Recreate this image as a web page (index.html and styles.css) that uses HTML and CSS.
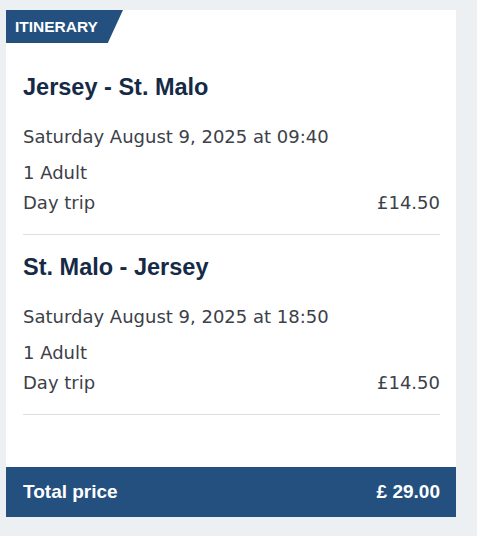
FILE: index.html
```html
<!DOCTYPE html>
<html lang="en">
<head>
<meta charset="utf-8">
<title>Itinerary</title>
<link rel="stylesheet" href="styles.css">
</head>
<body>
<div class="card">
  <div class="badge">ITINERARY</div>
  <div class="body">
    <div class="leg">
      <h2 class="route">Jersey - St. Malo</h2>
      <div class="date">Saturday August 9, 2025 at 09:40</div>
      <div class="pax">1 Adult</div>
      <div class="row"><span>Day trip</span><span>£14.50</span></div>
    </div>
    <div class="leg">
      <h2 class="route">St. Malo - Jersey</h2>
      <div class="date">Saturday August 9, 2025 at 18:50</div>
      <div class="pax">1 Adult</div>
      <div class="row"><span>Day trip</span><span>£14.50</span></div>
    </div>
  </div>
  <div class="total"><span>Total price</span><span>£ 29.00</span></div>
</div>
</body>
</html>
```
FILE: styles.css
```css
html, body {
  margin: 0;
  padding: 0;
  background: #edf0f3;
  font-family: "Liberation Sans", Arial, sans-serif;
}
body {
  padding: 10px 21px 19px 6px;
}
.card {
  width: 450px;
  background: #ffffff;
}
.badge {
  width: 117px;
  height: 33px;
  box-sizing: border-box;
  padding-left: 9px;
  background: #23507f;
  color: #ffffff;
  font-weight: bold;
  font-size: 15.5px;
  line-height: 33px;
  clip-path: polygon(0 0, 100% 0, 87% 100%, 0 100%);
}
.body {
  padding: 30px 16px 52px 17px;
}
.leg {
  border-bottom: 1px solid #dcdee0;
  padding-bottom: 19px;
}
.leg + .leg {
  padding-top: 18px;
}
.route {
  margin: 0;
  font-size: 23.5px;
  line-height: 28px;
  font-weight: bold;
  color: #152a46;
}
.date,
.pax,
.row {
  font-family: "DejaVu Sans", "Liberation Sans", sans-serif;
  font-size: 18px;
  line-height: 24px;
  color: #3c4149;
}
.date {
  margin-top: 24px;
}
.pax {
  margin-top: 12px;
}
.row {
  margin-top: 6px;
  display: flex;
  justify-content: space-between;
}
.total {
  height: 50px;
  box-sizing: border-box;
  padding: 0 16px 0 17px;
  background: #23507f;
  color: #ffffff;
  display: flex;
  justify-content: space-between;
  align-items: center;
  font-weight: bold;
  font-size: 19px;
}
```
